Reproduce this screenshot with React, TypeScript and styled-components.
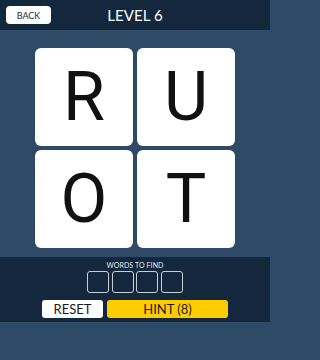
import React from "react";
import styled, { createGlobalStyle } from "styled-components";

const Global = createGlobalStyle`
  html, body { margin: 0; padding: 0; }
  body { background: #2f4a66; font-family: Lato, "Open Sans", sans-serif; }
  * { box-sizing: border-box; }
`;

const Screen = styled.div`
  width: 270px;
  height: 360px;
  background: #2f4a66;
  display: flex;
  flex-direction: column;
`;

const Header = styled.div`
  height: 30px;
  background: #14283d;
  display: grid;
  grid-template-columns: 1fr auto 1fr;
  align-items: center;
  padding: 0 6px;
`;

const BackButton = styled.button`
  justify-self: start;
  width: 45px;
  height: 18px;
  border: none;
  border-radius: 4px;
  background: #ffffff;
  color: #1b2a3a;
  font-family: Lato, sans-serif;
  font-size: 9px;
  padding: 0;
`;

const Title = styled.div`
  color: #ffffff;
  font-family: Lato, sans-serif;
  font-size: 15px;
  letter-spacing: 0.1px;
`;

const Board = styled.div`
  margin: 18px auto 0;
  display: grid;
  grid-template-columns: 98px 98px;
  grid-template-rows: 98px 98px;
  gap: 4px;
`;

const Tile = styled.div`
  background: #ffffff;
  border-radius: 6px;
  display: flex;
  align-items: center;
  justify-content: center;
  color: #111111;
  font-family: Roboto, sans-serif;
  font-size: 68px;
  line-height: 1;
`;

const Panel = styled.div`
  margin-top: 9px;
  height: 65px;
  background: #14283d;
  display: flex;
  flex-direction: column;
  align-items: center;
  padding-top: 4px;
`;

const PanelLabel = styled.div`
  color: #e6ebf0;
  font-family: Lato, sans-serif;
  font-size: 7px;
  line-height: 8px;
  letter-spacing: 0.1px;
`;

const Slots = styled.div`
  display: flex;
  gap: 2.5px;
  margin-top: 2px;
`;

const Slot = styled.div`
  width: 22px;
  height: 22px;
  border: 1.5px solid #c9ced4;
  border-radius: 3px;
`;

const Actions = styled.div`
  display: flex;
  gap: 4px;
  margin-top: 7px;
`;

const ActionButton = styled.button<{ $primary?: boolean }>`
  height: 18px;
  width: ${(p) => (p.$primary ? "121px" : "61px")};
  border: none;
  border-radius: 3px;
  background: ${(p) => (p.$primary ? "#ffcc00" : "#ffffff")};
  color: #1b1b1b;
  font-family: Lato, sans-serif;
  font-size: 13px;
  padding: 0;
`;

export default function App() {
  return (
    <>
      <Global />
      <Screen>
        <Header>
          <BackButton>BACK</BackButton>
          <Title>LEVEL 6</Title>
          <span />
        </Header>
        <Board>
          {["R", "U", "O", "T"].map((l) => (
            <Tile key={l}>{l}</Tile>
          ))}
        </Board>
        <Panel>
          <PanelLabel>WORDS TO FIND</PanelLabel>
          <Slots>
            {[0, 1, 2, 3].map((i) => (
              <Slot key={i} />
            ))}
          </Slots>
          <Actions>
            <ActionButton>RESET</ActionButton>
            <ActionButton $primary>HINT (8)</ActionButton>
          </Actions>
        </Panel>
      </Screen>
    </>
  );
}
